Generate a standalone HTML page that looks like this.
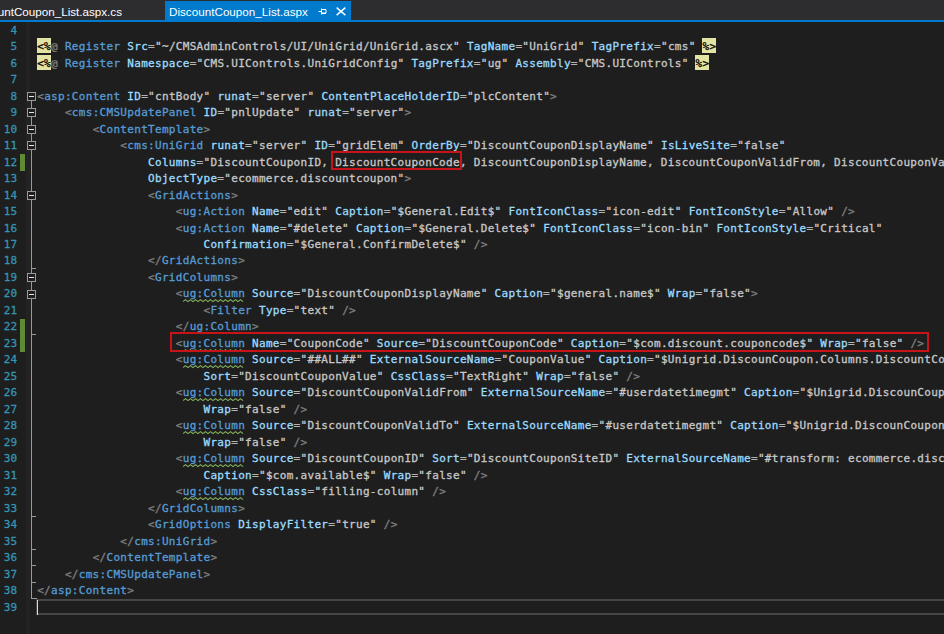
<!DOCTYPE html>
<html><head><meta charset="utf-8"><title>DiscountCoupon_List.aspx</title>
<style>
html,body{margin:0;padding:0;}
body{width:944px;height:634px;overflow:hidden;background:#1e1e1e;position:relative;font-family:"DejaVu Sans Mono","Liberation Mono",monospace;}
#tabs{position:absolute;left:0;top:0;width:944px;height:20px;background:#2d2d30;}
#tabline{position:absolute;left:0;top:20px;width:944px;height:2px;background:#007acc;}
.tab{position:absolute;top:0;height:20px;font-family:"Liberation Sans",sans-serif;font-size:11.65px;line-height:20px;color:#fff;white-space:nowrap;}
#t1{left:0;width:122px;overflow:hidden;}
#t1 span{position:absolute;right:0;top:2px;letter-spacing:0px;}
#t2{left:165px;width:186px;background:#007acc;top:1px;height:19px}
#t2 span{position:absolute;left:4px;top:1px;letter-spacing:0.02px;}
#t2 svg{position:absolute;left:0;top:-1px;}
.ln,.cl{position:absolute;white-space:pre;font-size:11px;line-height:16px;height:16px;letter-spacing:0.307px;}
.ln{left:0;width:17.5px;text-align:right;color:#3494b2;-webkit-text-stroke:0.3px;}
.cl{left:37.2px;color:#c8c8c8;-webkit-text-stroke:0.3px;}
i,b{font-style:normal;font-weight:normal;}
.g{color:#808080;} .e{color:#569cd6;} .a{color:#9cdcfe;} .o{color:#b4b4b4;} .v{color:#c8c8c8;}
.y{color:#000;-webkit-text-stroke:0.3px #000;}
.yb{position:absolute;background:#e3e3a3;}
#gut{position:absolute;left:0;top:22px;}
.sqs{position:absolute;}
.chg{position:absolute;left:19.5px;width:5px;background:#5f8b35;}
.box{position:absolute;border:2px solid #c81418;box-sizing:border-box;}
#cur{position:absolute;left:36px;top:598.5px;width:920px;height:16px;border:2px solid #464646;box-sizing:border-box;}
#band{position:absolute;left:26px;top:22px;width:4px;height:612px;background:#232324;z-index:-1;}
#caret{position:absolute;left:37px;top:600px;width:1px;height:15px;background:#dcdcdc;}
</style></head><body>
<div id="tabs">
<div class="tab" id="t1"><span>DiscountCoupon_List.aspx.cs</span></div>
<div class="tab" id="t2"><span>DiscountCoupon_List.aspx</span>
<svg width="186" height="20" viewBox="0 0 186 20" fill="none" stroke="#fff" stroke-width="1">
<path d="M153.5 11.5H156.5M156.5 8.5V14.5M156.5 9.5H161V13H156.5M156.5 13.5H161" />
<path d="M171.6 7.6L180.4 15.1M180.4 7.6L171.6 15.1" stroke-width="1.4"/>
</svg></div>
</div>
<div id="tabline"></div>

<div class="yb" style="left:36.90px;top:38.06px;width:14.06px;height:15px"></div>
<div class="yb" style="left:702.37px;top:38.06px;width:14.06px;height:15px"></div>
<div class="yb" style="left:36.90px;top:54.56px;width:14.06px;height:15px"></div>
<div class="yb" style="left:695.44px;top:54.56px;width:14.06px;height:15px"></div>
<div class="ln" style="top:23.00px">4</div>
<div class="ln" style="top:39.00px">5</div>
<div class="cl" style="top:39.00px"><b class="y">&lt;%</b><i class="g">@</i> <i class="e">Register</i> <i class="a">Src</i><i class="o">=</i><i class="v">"~/CMSAdminControls/UI/UniGrid/UniGrid.ascx"</i> <i class="a">TagName</i><i class="o">=</i><i class="v">"UniGrid"</i> <i class="a">TagPrefix</i><i class="o">=</i><i class="v">"cms"</i> <b class="y">%&gt;</b></div>
<div class="ln" style="top:56.00px">6</div>
<div class="cl" style="top:56.00px"><b class="y">&lt;%</b><i class="g">@</i> <i class="e">Register</i> <i class="a">Namespace</i><i class="o">=</i><i class="v">"CMS.UIControls.UniGridConfig"</i> <i class="a">TagPrefix</i><i class="o">=</i><i class="v">"ug"</i> <i class="a">Assembly</i><i class="o">=</i><i class="v">"CMS.UIControls"</i> <b class="y">%&gt;</b></div>
<div class="ln" style="top:72.00px">7</div>
<div class="ln" style="top:89.00px">8</div>
<div class="cl" style="top:89.00px"><i class="g">&lt;</i><i class="e">asp:Content</i> <i class="a">ID</i><i class="o">=</i><i class="v">"cntBody"</i> <i class="a">runat</i><i class="o">=</i><i class="v">"server"</i> <i class="a">ContentPlaceHolderID</i><i class="o">=</i><i class="v">"plcContent"</i><i class="g">&gt;</i></div>
<div class="ln" style="top:105.00px">9</div>
<div class="cl" style="top:105.00px">    <i class="g">&lt;</i><i class="e">cms:CMSUpdatePanel</i> <i class="a">ID</i><i class="o">=</i><i class="v">"pnlUpdate"</i> <i class="a">runat</i><i class="o">=</i><i class="v">"server"</i><i class="g">&gt;</i></div>
<div class="ln" style="top:122.00px">10</div>
<div class="cl" style="top:122.00px">        <i class="g">&lt;</i><i class="e">ContentTemplate</i><i class="g">&gt;</i></div>
<div class="ln" style="top:138.00px">11</div>
<div class="cl" style="top:138.00px">            <i class="g">&lt;</i><i class="e">cms:UniGrid</i> <i class="a">runat</i><i class="o">=</i><i class="v">"server"</i> <i class="a">ID</i><i class="o">=</i><i class="v">"gridElem"</i> <i class="a">OrderBy</i><i class="o">=</i><i class="v">"DiscountCouponDisplayName"</i> <i class="a">IsLiveSite</i><i class="o">=</i><i class="v">"false"</i></div>
<div class="ln" style="top:155.00px">12</div>
<div class="cl" style="top:155.00px">                <i class="a">Columns</i><i class="o">=</i><i class="v">"DiscountCouponID, DiscountCouponCode, DiscountCouponDisplayName, DiscountCouponValidFrom, DiscountCouponValidTo"</i></div>
<div class="ln" style="top:171.00px">13</div>
<div class="cl" style="top:171.00px">                <i class="a">ObjectType</i><i class="o">=</i><i class="v">"ecommerce.discountcoupon"</i><i class="g">&gt;</i></div>
<div class="ln" style="top:188.00px">14</div>
<div class="cl" style="top:188.00px">                <i class="g">&lt;</i><i class="e">GridActions</i><i class="g">&gt;</i></div>
<div class="ln" style="top:204.00px">15</div>
<div class="cl" style="top:204.00px">                    <i class="g">&lt;</i><i class="e">ug:Action</i> <i class="a">Name</i><i class="o">=</i><i class="v">"edit"</i> <i class="a">Caption</i><i class="o">=</i><i class="v">"$General.Edit$"</i> <i class="a">FontIconClass</i><i class="o">=</i><i class="v">"icon-edit"</i> <i class="a">FontIconStyle</i><i class="o">=</i><i class="v">"Allow"</i> <i class="g">/&gt;</i></div>
<div class="ln" style="top:221.00px">16</div>
<div class="cl" style="top:221.00px">                    <i class="g">&lt;</i><i class="e">ug:Action</i> <i class="a">Name</i><i class="o">=</i><i class="v">"#delete"</i> <i class="a">Caption</i><i class="o">=</i><i class="v">"$General.Delete$"</i> <i class="a">FontIconClass</i><i class="o">=</i><i class="v">"icon-bin"</i> <i class="a">FontIconStyle</i><i class="o">=</i><i class="v">"Critical"</i></div>
<div class="ln" style="top:237.00px">17</div>
<div class="cl" style="top:237.00px">                        <i class="a">Confirmation</i><i class="o">=</i><i class="v">"$General.ConfirmDelete$"</i> <i class="g">/&gt;</i></div>
<div class="ln" style="top:253.00px">18</div>
<div class="cl" style="top:253.00px">                <i class="g">&lt;/</i><i class="e">GridActions</i><i class="g">&gt;</i></div>
<div class="ln" style="top:270.00px">19</div>
<div class="cl" style="top:270.00px">                <i class="g">&lt;</i><i class="e">GridColumns</i><i class="g">&gt;</i></div>
<div class="ln" style="top:286.00px">20</div>
<div class="cl" style="top:286.00px">                    <i class="g">&lt;</i><i class="e sq">ug:Column</i> <i class="a">Source</i><i class="o">=</i><i class="v">"DiscountCouponDisplayName"</i> <i class="a">Caption</i><i class="o">=</i><i class="v">"$general.name$"</i> <i class="a">Wrap</i><i class="o">=</i><i class="v">"false"</i><i class="g">&gt;</i></div>
<div class="ln" style="top:303.00px">21</div>
<div class="cl" style="top:303.00px">                        <i class="g">&lt;</i><i class="e">Filter</i> <i class="a">Type</i><i class="o">=</i><i class="v">"text"</i> <i class="g">/&gt;</i></div>
<div class="ln" style="top:319.00px">22</div>
<div class="cl" style="top:319.00px">                    <i class="g">&lt;/</i><i class="e">ug:Column</i><i class="g">&gt;</i></div>
<div class="ln" style="top:336.00px">23</div>
<div class="cl" style="top:336.00px">                    <i class="g">&lt;</i><i class="e sq">ug:Column</i> <i class="a">Name</i><i class="o">=</i><i class="v">"CouponCode"</i> <i class="a">Source</i><i class="o">=</i><i class="v">"DiscountCouponCode"</i> <i class="a">Caption</i><i class="o">=</i><i class="v">"$com.discount.couponcode$"</i> <i class="a">Wrap</i><i class="o">=</i><i class="v">"false"</i> <i class="g">/&gt;</i></div>
<div class="ln" style="top:352.00px">24</div>
<div class="cl" style="top:352.00px">                    <i class="g">&lt;</i><i class="e sq">ug:Column</i> <i class="a">Source</i><i class="o">=</i><i class="v">"##ALL##"</i> <i class="a">ExternalSourceName</i><i class="o">=</i><i class="v">"CouponValue"</i> <i class="a">Caption</i><i class="o">=</i><i class="v">"$Unigrid.DiscounCoupon.Columns.DiscountCouponValue$"</i></div>
<div class="ln" style="top:369.00px">25</div>
<div class="cl" style="top:369.00px">                        <i class="a">Sort</i><i class="o">=</i><i class="v">"DiscountCouponValue"</i> <i class="a">CssClass</i><i class="o">=</i><i class="v">"TextRight"</i> <i class="a">Wrap</i><i class="o">=</i><i class="v">"false"</i> <i class="g">/&gt;</i></div>
<div class="ln" style="top:385.00px">26</div>
<div class="cl" style="top:385.00px">                    <i class="g">&lt;</i><i class="e sq">ug:Column</i> <i class="a">Source</i><i class="o">=</i><i class="v">"DiscountCouponValidFrom"</i> <i class="a">ExternalSourceName</i><i class="o">=</i><i class="v">"#userdatetimegmt"</i> <i class="a">Caption</i><i class="o">=</i><i class="v">"$Unigrid.DiscounCoupon.Columns.DiscountCouponValidFrom$"</i></div>
<div class="ln" style="top:402.00px">27</div>
<div class="cl" style="top:402.00px">                        <i class="a">Wrap</i><i class="o">=</i><i class="v">"false"</i> <i class="g">/&gt;</i></div>
<div class="ln" style="top:418.00px">28</div>
<div class="cl" style="top:418.00px">                    <i class="g">&lt;</i><i class="e sq">ug:Column</i> <i class="a">Source</i><i class="o">=</i><i class="v">"DiscountCouponValidTo"</i> <i class="a">ExternalSourceName</i><i class="o">=</i><i class="v">"#userdatetimegmt"</i> <i class="a">Caption</i><i class="o">=</i><i class="v">"$Unigrid.DiscounCoupon.Columns.DiscountCouponValidTo$"</i></div>
<div class="ln" style="top:435.00px">29</div>
<div class="cl" style="top:435.00px">                        <i class="a">Wrap</i><i class="o">=</i><i class="v">"false"</i> <i class="g">/&gt;</i></div>
<div class="ln" style="top:451.00px">30</div>
<div class="cl" style="top:451.00px">                    <i class="g">&lt;</i><i class="e sq">ug:Column</i> <i class="a">Source</i><i class="o">=</i><i class="v">"DiscountCouponID"</i> <i class="a">Sort</i><i class="o">=</i><i class="v">"DiscountCouponSiteID"</i> <i class="a">ExternalSourceName</i><i class="o">=</i><i class="v">"#transform: ecommerce.discountcoupon"</i></div>
<div class="ln" style="top:468.00px">31</div>
<div class="cl" style="top:468.00px">                        <i class="a">Caption</i><i class="o">=</i><i class="v">"$com.available$"</i> <i class="a">Wrap</i><i class="o">=</i><i class="v">"false"</i> <i class="g">/&gt;</i></div>
<div class="ln" style="top:484.00px">32</div>
<div class="cl" style="top:484.00px">                    <i class="g">&lt;</i><i class="e sq">ug:Column</i> <i class="a">CssClass</i><i class="o">=</i><i class="v">"filling-column"</i> <i class="g">/&gt;</i></div>
<div class="ln" style="top:501.00px">33</div>
<div class="cl" style="top:501.00px">                <i class="g">&lt;/</i><i class="e">GridColumns</i><i class="g">&gt;</i></div>
<div class="ln" style="top:517.00px">34</div>
<div class="cl" style="top:517.00px">                <i class="g">&lt;</i><i class="e">GridOptions</i> <i class="a">DisplayFilter</i><i class="o">=</i><i class="v">"true"</i> <i class="g">/&gt;</i></div>
<div class="ln" style="top:534.00px">35</div>
<div class="cl" style="top:534.00px">            <i class="g">&lt;/</i><i class="e">cms:UniGrid</i><i class="g">&gt;</i></div>
<div class="ln" style="top:550.00px">36</div>
<div class="cl" style="top:550.00px">        <i class="g">&lt;/</i><i class="e">ContentTemplate</i><i class="g">&gt;</i></div>
<div class="ln" style="top:567.00px">37</div>
<div class="cl" style="top:567.00px">    <i class="g">&lt;/</i><i class="e">cms:CMSUpdatePanel</i><i class="g">&gt;</i></div>
<div class="ln" style="top:583.00px">38</div>
<div class="cl" style="top:583.00px"><i class="g">&lt;/</i><i class="e">asp:Content</i><i class="g">&gt;</i></div>
<div class="ln" style="top:600.00px">39</div>
<svg class="sqs" style="left:183.07px;top:298.90px" width="62.0" height="4" viewBox="0 0 62.0 4"><polyline points="0.00 2.6 2.50 0.6 5.00 2.6 7.50 0.6 10.00 2.6 12.50 0.6 15.00 2.6 17.50 0.6 20.00 2.6 22.50 0.6 25.00 2.6 27.50 0.6 30.00 2.6 32.50 0.6 35.00 2.6 37.50 0.6 40.00 2.6 42.50 0.6 45.00 2.6 47.50 0.6 50.00 2.6 52.50 0.6 55.00 2.6 57.50 0.6 60.00 2.6" fill="none" stroke="#86b25e" stroke-width="1.1" stroke-linejoin="round"/></svg>
<svg class="sqs" style="left:183.07px;top:348.90px" width="62.0" height="4" viewBox="0 0 62.0 4"><polyline points="0.00 2.6 2.50 0.6 5.00 2.6 7.50 0.6 10.00 2.6 12.50 0.6 15.00 2.6 17.50 0.6 20.00 2.6 22.50 0.6 25.00 2.6 27.50 0.6 30.00 2.6 32.50 0.6 35.00 2.6 37.50 0.6 40.00 2.6 42.50 0.6 45.00 2.6 47.50 0.6 50.00 2.6 52.50 0.6 55.00 2.6 57.50 0.6 60.00 2.6" fill="none" stroke="#86b25e" stroke-width="1.1" stroke-linejoin="round"/></svg>
<svg class="sqs" style="left:183.07px;top:364.90px" width="62.0" height="4" viewBox="0 0 62.0 4"><polyline points="0.00 2.6 2.50 0.6 5.00 2.6 7.50 0.6 10.00 2.6 12.50 0.6 15.00 2.6 17.50 0.6 20.00 2.6 22.50 0.6 25.00 2.6 27.50 0.6 30.00 2.6 32.50 0.6 35.00 2.6 37.50 0.6 40.00 2.6 42.50 0.6 45.00 2.6 47.50 0.6 50.00 2.6 52.50 0.6 55.00 2.6 57.50 0.6 60.00 2.6" fill="none" stroke="#86b25e" stroke-width="1.1" stroke-linejoin="round"/></svg>
<svg class="sqs" style="left:183.07px;top:397.90px" width="62.0" height="4" viewBox="0 0 62.0 4"><polyline points="0.00 2.6 2.50 0.6 5.00 2.6 7.50 0.6 10.00 2.6 12.50 0.6 15.00 2.6 17.50 0.6 20.00 2.6 22.50 0.6 25.00 2.6 27.50 0.6 30.00 2.6 32.50 0.6 35.00 2.6 37.50 0.6 40.00 2.6 42.50 0.6 45.00 2.6 47.50 0.6 50.00 2.6 52.50 0.6 55.00 2.6 57.50 0.6 60.00 2.6" fill="none" stroke="#86b25e" stroke-width="1.1" stroke-linejoin="round"/></svg>
<svg class="sqs" style="left:183.07px;top:430.90px" width="62.0" height="4" viewBox="0 0 62.0 4"><polyline points="0.00 2.6 2.50 0.6 5.00 2.6 7.50 0.6 10.00 2.6 12.50 0.6 15.00 2.6 17.50 0.6 20.00 2.6 22.50 0.6 25.00 2.6 27.50 0.6 30.00 2.6 32.50 0.6 35.00 2.6 37.50 0.6 40.00 2.6 42.50 0.6 45.00 2.6 47.50 0.6 50.00 2.6 52.50 0.6 55.00 2.6 57.50 0.6 60.00 2.6" fill="none" stroke="#86b25e" stroke-width="1.1" stroke-linejoin="round"/></svg>
<svg class="sqs" style="left:183.07px;top:463.90px" width="62.0" height="4" viewBox="0 0 62.0 4"><polyline points="0.00 2.6 2.50 0.6 5.00 2.6 7.50 0.6 10.00 2.6 12.50 0.6 15.00 2.6 17.50 0.6 20.00 2.6 22.50 0.6 25.00 2.6 27.50 0.6 30.00 2.6 32.50 0.6 35.00 2.6 37.50 0.6 40.00 2.6 42.50 0.6 45.00 2.6 47.50 0.6 50.00 2.6 52.50 0.6 55.00 2.6 57.50 0.6 60.00 2.6" fill="none" stroke="#86b25e" stroke-width="1.1" stroke-linejoin="round"/></svg>
<svg class="sqs" style="left:183.07px;top:496.90px" width="62.0" height="4" viewBox="0 0 62.0 4"><polyline points="0.00 2.6 2.50 0.6 5.00 2.6 7.50 0.6 10.00 2.6 12.50 0.6 15.00 2.6 17.50 0.6 20.00 2.6 22.50 0.6 25.00 2.6 27.50 0.6 30.00 2.6 32.50 0.6 35.00 2.6 37.50 0.6 40.00 2.6 42.50 0.6 45.00 2.6 47.50 0.6 50.00 2.6 52.50 0.6 55.00 2.6 57.50 0.6 60.00 2.6" fill="none" stroke="#86b25e" stroke-width="1.1" stroke-linejoin="round"/></svg>
<svg id="gut" width="40" height="612" viewBox="0 22 40 612" shape-rendering="crispEdges"><path d="M31.5 97V598.5H36.5" stroke="#9a9a9a" fill="none"/><path d="M31.5 268.5H36" stroke="#9a9a9a" fill="none"/><path d="M31.5 334.5H36" stroke="#9a9a9a" fill="none"/><path d="M31.5 516.5H36" stroke="#9a9a9a" fill="none"/><path d="M31.5 549.5H36" stroke="#9a9a9a" fill="none"/><path d="M31.5 565.5H36" stroke="#9a9a9a" fill="none"/><path d="M31.5 582.5H36" stroke="#9a9a9a" fill="none"/><rect x="27.5" y="92.5" width="8" height="8" fill="#1e1e1e" stroke="#9a9a9a"/><path d="M29 96.5H34" stroke="#e6e6e6" fill="none"/><rect x="27.5" y="108.5" width="8" height="8" fill="#1e1e1e" stroke="#9a9a9a"/><path d="M29 112.5H34" stroke="#e6e6e6" fill="none"/><rect x="27.5" y="125.5" width="8" height="8" fill="#1e1e1e" stroke="#9a9a9a"/><path d="M29 129.5H34" stroke="#e6e6e6" fill="none"/><rect x="27.5" y="141.5" width="8" height="8" fill="#1e1e1e" stroke="#9a9a9a"/><path d="M29 145.5H34" stroke="#e6e6e6" fill="none"/><rect x="27.5" y="191.5" width="8" height="8" fill="#1e1e1e" stroke="#9a9a9a"/><path d="M29 195.5H34" stroke="#e6e6e6" fill="none"/><rect x="27.5" y="273.5" width="8" height="8" fill="#1e1e1e" stroke="#9a9a9a"/><path d="M29 277.5H34" stroke="#e6e6e6" fill="none"/><rect x="27.5" y="290.5" width="8" height="8" fill="#1e1e1e" stroke="#9a9a9a"/><path d="M29 294.5H34" stroke="#e6e6e6" fill="none"/></svg>
<div class="chg" style="top:154px;height:16.5px"></div>
<div class="chg" style="top:319px;height:33px"></div>
<div class="box" style="left:331px;top:151px;width:131px;height:19px"></div>
<div class="box" style="left:170px;top:332px;width:759px;height:20px"></div>
<div id="band"></div><div id="cur"></div><div id="caret"></div>
</body></html>
